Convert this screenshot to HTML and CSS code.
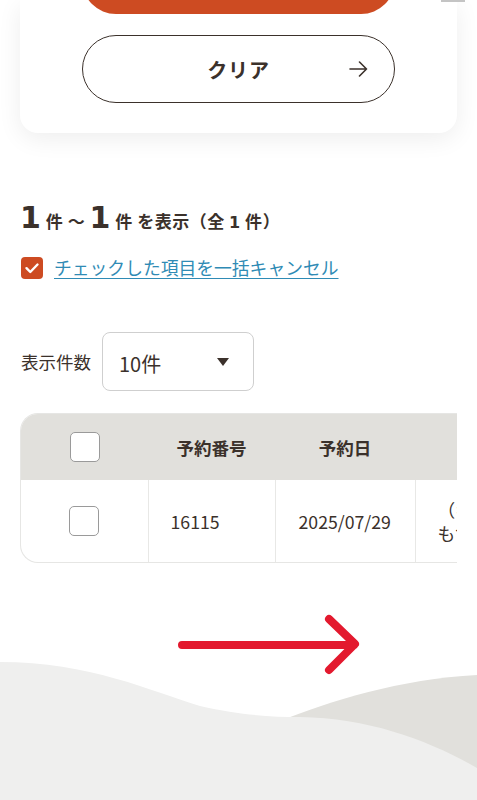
FILE: index.html
```html
<!DOCTYPE html>
<html lang="ja">
<head>
<meta charset="utf-8">
<title>予約一覧</title>
<link rel="stylesheet" href="styles.css">
</head>
<body>
<div class="page-top"></div>
<main class="page">
  <section class="card">
    <button class="btn-primary" type="button">検索する</button>
    <button class="btn-clear" type="button">
      <span class="btn-label">クリア</span>
      <svg class="btn-arrow" width="19" height="16" viewBox="0 0 19 16"><path d="M1 8H17.5M10.5 1L17.5 8L10.5 15" fill="none" stroke="#3b312b" stroke-width="1.6" stroke-linecap="round" stroke-linejoin="round"/></svg>
    </button>
  </section>

  <p class="result-count"><span class="num">1</span> 件 ～ <span class="num">1</span> 件 を表示（全 <span class="small-num">1</span> 件）</p>

  <div class="bulk">
    <span class="check checked"><svg width="22" height="22" viewBox="0 0 22 22"><path d="M5.5 11.2L9.3 15L16.5 7.5" fill="none" stroke="#fff" stroke-width="2.4" stroke-linecap="round" stroke-linejoin="round"/></svg></span>
    <a class="bulk-link" href="#">チェックした項目を一括キャンセル</a>
  </div>

  <div class="per-page">
    <span class="per-page-label">表示件数</span>
    <div class="select"><span>10件</span><span class="caret"></span></div>
  </div>

  <div class="table-wrap">
    <table class="list">
      <thead>
        <tr>
          <th class="c1"><span class="check"></span></th>
          <th class="c2">予約番号</th>
          <th class="c3">予約日</th>
          <th class="c4">ステータス</th>
          <th class="c5">プラン名</th>
        </tr>
      </thead>
      <tbody>
        <tr>
          <td class="c1"><span class="check"></span></td>
          <td class="c2">16115</td>
          <td class="c3">2025/07/29</td>
          <td class="c4">（キャンセル）<br>も含む</td>
          <td class="c5">スタンダード</td>
        </tr>
      </tbody>
    </table>
  </div>
</main>
<footer class="foot">
  <svg class="waves" width="477" height="189" viewBox="0 0 477 189">
    <path d="M280 109C330 89 400 67 477 63V189H280Z" fill="#e1e0dc"/>
    <path d="M0 50C90 50 150 79 200 94C240 103 270 105 300 105C370 106 430 129 477 156V189H0Z" fill="#efefee"/>
  </svg>
  <svg class="scroll-hint" width="477" height="70" viewBox="0 0 477 70">
    <path d="M182 33H354M329 7L355 32L329 58" fill="none" stroke="#e3192e" stroke-width="8" stroke-linecap="round" stroke-linejoin="round"/>
  </svg>
</footer>
</body>
</html>
```
FILE: styles.css
```css
html, body {
  margin: 0;
  padding: 0;
}
body {
  width: 477px;
  height: 800px;
  overflow: hidden;
  background: #fff;
  color: #3b312b;
  font-family: "Noto Sans CJK JP", "Noto Sans", sans-serif;
}
.page-top {
  position: fixed;
  top: 0;
  right: 12px;
  width: 24px;
  height: 2px;
  background: #c4c4c4;
}
.page {
  padding: 0 20px;
}
.card {
  background: #fff;
  border-radius: 0 0 18px 18px;
  box-shadow: 0 6px 24px rgba(0, 0, 0, 0.07);
  padding: 0 0 30px;
  display: flex;
  flex-direction: column;
  align-items: center;
  gap: 21px;
}
.btn-primary {
  width: 313px;
  height: 68px;
  margin-top: -54px;
  border: none;
  border-radius: 34px;
  background: #cd4b22;
  color: #fff;
  font: inherit;
}
.btn-clear {
  width: 313px;
  height: 68px;
  border: 1px solid #3b312b;
  border-radius: 34px;
  background: #fff;
  color: #3b312b;
  font-family: inherit;
  font-size: 20px;
  font-weight: 700;
  display: grid;
  grid-template-columns: 1fr auto 1fr;
  align-items: center;
  padding: 0 26px;
}
.btn-label {
  grid-column: 2;
  letter-spacing: 0.04em;
}
.btn-arrow {
  grid-column: 3;
  justify-self: end;
}
.result-count {
  margin: 68px 0 0;
  font-size: 17px;
  font-weight: 700;
  line-height: 40px;
  letter-spacing: 0.03em;
}
.num {
  font-family: "DejaVu Sans", sans-serif;
  font-size: 30px;
  font-weight: 700;
  line-height: 1;
}
.small-num {
  font-family: "DejaVu Sans", sans-serif;
  font-size: 16px;
}
.bulk {
  margin-top: 12px;
  display: flex;
  align-items: center;
  gap: 11px;
  padding-left: 1px;
}
.check {
  display: inline-block;
  box-sizing: border-box;
  width: 30px;
  height: 30px;
  border: 1.5px solid #9a9a9a;
  border-radius: 5px;
  background: #fff;
  vertical-align: middle;
}
.check.checked {
  width: 22px;
  height: 22px;
  border: none;
  border-radius: 4px;
  background: #cd4b22;
}
.check.checked svg {
  display: block;
}
.bulk-link {
  color: #2f8bb5;
  font-size: 17.8px;
  line-height: 25px;
  text-decoration: underline;
  text-underline-offset: 3px;
}
.per-page {
  margin-top: 52px;
  display: flex;
  align-items: center;
  gap: 11px;
  padding-left: 1px;
}
.per-page-label {
  font-size: 17.5px;
}
.select {
  box-sizing: border-box;
  width: 152px;
  height: 59px;
  border: 1px solid #cfcfcf;
  border-radius: 8px;
  display: flex;
  align-items: center;
  justify-content: space-between;
  padding: 3px 24px 0 16px;
  font-size: 20px;
}
.caret {
  width: 0;
  height: 0;
  border-left: 6.5px solid transparent;
  border-right: 6.5px solid transparent;
  border-top: 8px solid #3b312b;
  margin-bottom: 3px;
}
.table-wrap {
  margin-top: 22px;
  border: 1px solid #e6e6e4;
  border-right: none;
  border-radius: 18px 0 0 18px;
  overflow: hidden;
}
.list {
  border-collapse: collapse;
  table-layout: fixed;
  width: 720px;
}
.list th {
  height: 66px;
  background: #e1e0dc;
  font-size: 17.5px;
  font-weight: 700;
  text-align: center;
  padding: 0;
}
.list td {
  height: 82px;
  font-size: 17.7px;
  padding: 0 0 0 22px;
  border-right: 1px solid #e8e8e6;
  text-align: left;
  line-height: 24px;
  white-space: nowrap;
}
.list td.c1 {
  text-align: center;
  padding: 0;
}
.list td.c3 {
  padding-left: 23px;
}
.list .c1 { width: 127px; }
.list .c2 { width: 127px; }
.list .c3 { width: 140px; }
.list .c4 { width: 180px; }
.list .c5 { width: 146px; }
.list th .check,
.list td .check {
  display: block;
  margin: 0 auto;
}
.foot {
  position: relative;
  margin-top: 49px;
  height: 189px;
}
.waves {
  display: block;
}
.scroll-hint {
  position: absolute;
  top: 0;
  left: 0;
}
```
